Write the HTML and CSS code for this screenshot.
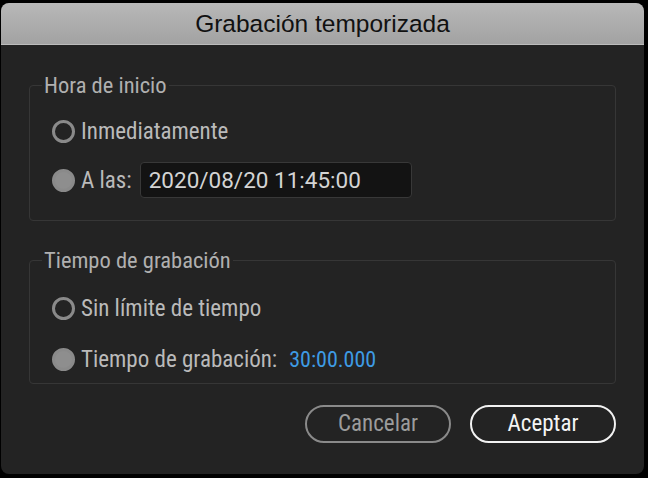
FILE: index.html
```html
<!DOCTYPE html>
<html lang="es">
<head>
<meta charset="utf-8">
<title>Grabación temporizada</title>
<link rel="stylesheet" href="styles.css">
</head>
<body>
<div class="dialog">
  <div class="titlebar">Grabación temporizada</div>
  <div class="content">
    <fieldset class="group group-start">
      <legend class="legend">Hora de inicio</legend>
      <div class="row row-first">
        <span class="radio"></span>
        <span class="label">Inmediatamente</span>
      </div>
      <div class="row row-input">
        <span class="radio radio-on"></span>
        <span class="label">A las:</span>
        <span class="field">2020/08/20 11:45:00</span>
      </div>
    </fieldset>
    <fieldset class="group group-time">
      <legend class="legend">Tiempo de grabación</legend>
      <div class="row row-first">
        <span class="radio"></span>
        <span class="label">Sin límite de tiempo</span>
      </div>
      <div class="row row-second">
        <span class="radio radio-on"></span>
        <span class="label">Tiempo de grabación:</span>
        <span class="value">30:00.000</span>
      </div>
    </fieldset>
    <div class="buttons">
      <button class="btn btn-cancel">Cancelar</button>
      <button class="btn btn-ok">Aceptar</button>
    </div>
  </div>
</div>
</body>
</html>
```
FILE: styles.css
```css
html, body {
  margin: 0;
  padding: 0;
  background: #000;
  width: 648px;
  height: 478px;
  overflow: hidden;
}

body {
  font-family: Roboto, "Liberation Sans", sans-serif;
  font-stretch: condensed;
  font-weight: 400;
}

.dialog {
  margin: 3px 4px 0 1px;
  width: 643px;
  height: 471px;
  background: #232323;
  border-radius: 8px;
  overflow: hidden;
  display: flex;
  flex-direction: column;
}

.titlebar {
  height: 42px;
  flex: none;
  background: linear-gradient(#b8b8b8, #a2a2a2);
  border-bottom: 1px solid #bcbcbc;
  box-sizing: border-box;
  color: #111;
  font-family: "Liberation Sans", Arial, sans-serif;
  font-stretch: normal;
  font-weight: 400;
  font-size: 24.5px;
  line-height: 42px;
  text-align: center;
}

.content {
  padding: 0 28px 0 28px;
  display: flex;
  flex-direction: column;
}

.group {
  margin: 0;
  border: 1px solid #363636;
  border-radius: 4px;
  padding: 0 0 0 22px;
  min-width: 0;
}

.group-start {
  margin-top: 29px;
  padding-top: 20px;
  padding-bottom: 22px;
}

.group-time {
  margin-top: 28px;
  padding-top: 22px;
  padding-bottom: 9px;
}

.legend {
  margin-left: -10px;
  padding: 0 2px;
  color: #b0b0b0;
  font-size: 22.5px;
  line-height: 22px;
}

.row {
  display: flex;
  align-items: center;
  height: 30px;
}

.row-input {
  height: 36px;
  margin-top: 16px;
}

.row-second {
  margin-top: 21px;
}

.radio {
  width: 23px;
  height: 23px;
  box-sizing: border-box;
  border-radius: 50%;
  border: 3.5px solid #8a8a8a;
  flex: none;
}

.radio-on {
  background: #8e8e8e;
}

.label {
  margin-left: 6px;
  color: #bababa;
  font-size: 23px;
}

.field {
  margin-left: 8px;
  width: 272px;
  height: 36px;
  box-sizing: border-box;
  background: #131313;
  border: 1px solid #383838;
  border-radius: 4px;
  color: #d4d4d4;
  font-stretch: normal;
  font-size: 22.5px;
  line-height: 34px;
  padding-left: 8px;
}

.value {
  margin-left: 12px;
  color: #3e9be4;
  font-size: 22px;
}

.buttons {
  display: flex;
  justify-content: flex-end;
  gap: 19px;
  margin-top: 21px;
}

.btn {
  width: 146px;
  height: 38px;
  border-radius: 19px;
  background: transparent;
  font-family: Roboto, "Liberation Sans", sans-serif;
  font-stretch: condensed;
  font-weight: 400;
  font-size: 23px;
  line-height: 30px;
  padding: 0;
}

.btn-cancel {
  border: 2px solid #8a8a8a;
  color: #9c9c9c;
}

.btn-ok {
  border: 2px solid #f2f2f2;
  color: #f4f4f4;
}
```
